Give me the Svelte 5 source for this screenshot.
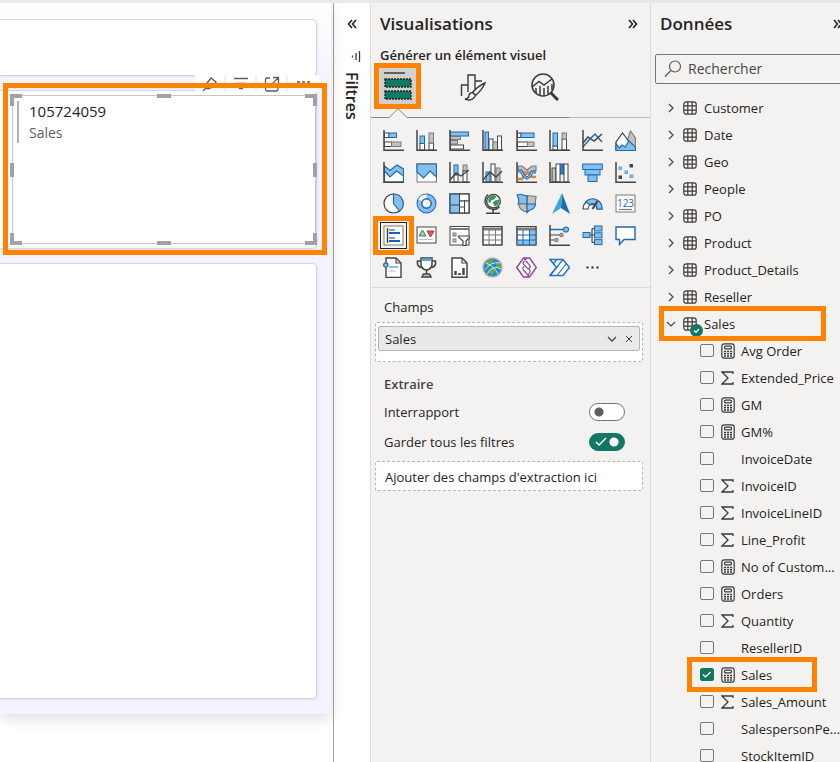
<script>
  const D = '#444444';
  const B = '#1f69ad';
  const LB = '#85bfee';
  const G = '#7d7b79';
  const LG = '#c4c2c0';
  const W = '#ffffff';

  const r = (x, y, w, h, fill, stroke) =>
    `<rect x="${x}" y="${y}" width="${w}" height="${h}" fill="${fill}" stroke="${stroke}"/>`;
  const p = (d, stroke = D, fill = 'none', width = 1.2) =>
    `<path d="${d}" stroke="${stroke}" fill="${fill}" stroke-width="${width}"/>`;
  const c = (x, y, radius, fill, stroke, width = 1.2) =>
    `<circle cx="${x}" cy="${y}" r="${radius}" fill="${fill}" stroke="${stroke}" stroke-width="${width}"/>`;
  const axis = p('M1 0V20.2H21', D, 'none', 1.5);

  const visuals = [
    ['Barres empilées', r(1.5, 3, 4.5, 4.5, W, D) + r(6, 3, 7.5, 4.5, LB, B) + r(1.5, 12, 7, 4.5, W, D) + r(8.5, 12, 9.5, 4.5, LG, G) + axis],
    ['Histogramme empilé', r(4, 13, 4.5, 7, W, D) + r(4, 6, 4.5, 7.5, LB, B) + r(13, 13, 4.5, 7, W, D) + r(13, 3, 4.5, 10, LG, G) + axis],
    ['Barres groupées', r(1.5, 2, 18, 4, LB, B) + r(1.5, 6.5, 10, 3, LG, G) + r(1.5, 10.5, 7, 3.5, LG, G) + r(1.5, 15, 13, 4, W, D) + axis],
    ['Histogramme groupé', r(3, 2, 3.5, 18, LB, B) + r(7, 9, 4, 11, W, D) + r(11, 12, 4.5, 8, LG, G) + r(15.5, 6, 4, 14, W, D) + axis],
    ['Barres 100 %', r(1.5, 3, 3.5, 4.5, W, D) + r(5, 3, 13, 4.5, LB, B) + r(1.5, 12, 10, 4.5, W, D) + r(11.5, 12, 6.5, 4.5, LG, G) + axis],
    ['Histogramme 100 %', r(4, 16, 4.5, 4, W, D) + r(4, 3, 4.5, 13, LB, B) + r(13, 9, 4.5, 11, W, D) + r(13, 3, 4.5, 6, LG, G) + axis],
    ['Courbes', p('M1 17L7 10L13 4L20 12', B, 'none', 1.5) + p('M1 13L6 7L12 11L20 4', D, 'none', 1.5) + axis],
    ['Aires', p('M9 20L15.5 1L20.5 8V20Z', G, LG) + p('M1 20V12L7.5 3L15 13L12 20Z', D, W) + p('M1 14L4.5 18L7 15L10 17L14 11L20.5 17V20.5H1Z', B, LB)],

    ['Aires empilées', p('M1.5 9L7 13L13.5 7L20.5 12V20H1.5Z', B, W) + p('M1.5 4L7 8.5L14 3L20.5 7V14L13.5 9L7 15L1.5 9Z', B, LB) + axis],
    ['Aires 100 %', r(1, 2, 19.5, 18, W, G) + p('M1 2H20.5V15L14 9L7.5 16L1 10Z', B, LB) + p('M1 1.7H20.5', G)],
    ['Courbes et histogramme empilé', r(5, 3, 4, 10, LB, B) + r(5, 13, 4, 7, W, D) + r(14, 3, 4, 6, LG, G) + r(14, 9, 4, 11, W, D) + p('M1 18L7 11L12 14L20 8', D, 'none', 1.4) + axis],
    ['Courbes et histogramme groupé', r(4, 10, 4, 10, LB, B) + r(9, 2, 4, 18, W, D) + r(14, 6, 4, 14, LG, G) + p('M1 18L8 10L14 15L20 9', D, 'none', 1.4) + axis],
    ['Ruban', p('M2 4L6 4L11 8L16 4H20V9H16L11 12L6 9H2Z', G, LG) + p('M2 17H6L11 10L16 15H20', '#e0842e', 'none', 2.6) + p('M2 9H5Q8 15 11 16Q14 15 16 10H20', B, 'none', 3) + p('M2 9H5Q8 15 11 16Q14 15 16 10H20', LB, 'none', 1.2) + axis],
    ['Cascade', r(3, 6, 4, 14, LG, D) + r(7, 2, 4, 18, W, D) + r(11.5, 2, 3, 10, '#2f7fc4', B) + r(15, 2, 4, 18, W, D) + axis],
    ['Entonnoir', r(0.7, 2, 19.6, 5.5, LB, B) + r(3, 7.5, 15, 5.5, LB, B) + r(6, 13, 9, 6.5, LB, B)],
    ['Nuage de points', r(4, 5, 2.5, 2.5, LB, '#6ca5d2') + r(10, 9, 2.5, 2.5, LB, '#6ca5d2') + r(15, 13, 3, 2.5, LB, '#6ca5d2') + r(15, 2.5, 2.5, 2.5, D, D) + r(4, 14, 2.5, 2.5, D, D) + axis],

    ['Secteurs', c(10.5, 10.5, 9.5, W, D) + p('M10.5 1A9.5 9.5 0 0 1 16.5 18L10.5 10.5Z', B, LB)],
    ['Anneau', c(10.5, 10.5, 7.2, 'none', B, 5.6) + c(10.5, 10.5, 7.2, 'none', LB, 3.6) + p('M4 7.3A7.2 7.2 0 0 1 10.5 3.3', W, 'none', 3.6) + c(10.5, 10.5, 4.4, '#f3f2f1', B, 1)],
    ['Treemap', r(1, 1, 9.5, 19, LB, B) + r(10.5, 1, 9.5, 7, W, D) + r(10.5, 8, 5, 12, W, D) + r(15.5, 8, 4.5, 12, W, D) + p('M1 12H10.5M10.5 14H15.5', D) + r(0.8, 0.8, 19.4, 19.4, 'none', D)],
    ['Carte', p('M6 1.5A8.500 8.500 0 1 0 17.5 14', D, 'none', 1.5) + c(11.5, 8.2, 6.8, W, D, 1.4) + p('M8 4Q11 1.500 14 3.500L12 6L9 7L7.500 10Q5.500 7 8 4ZM13 8L17 7Q17 12 13 13L11 10Z', '#2f8c55', '#3b9b62', 0.8) + p('M11 17V20M4 20.2H18', D, 'none', 1.6)],
    ['Carte choroplèthe', p('M11 2.500L20 3.500L19 12L11 11Z', G, LG) + p('M1 2Q5 0.500 7 2L11 3V11H2Q4 7 1 2Z', B, LB) + p('M2.500 11H11V19Q4 18 2.500 11Z', G, LG) + p('M11 11H19.500Q19 16 14 17L11 19.500Z', B, LB)],
    ['Azure Maps', '<path d="M13 0L21 21L12 15Z" fill="#1b6fa8"/><path d="M13 0L3 21L12 15Z" fill="#39a9dc"/>'],
    ['Jauge', p('M1 16A9.5 9.5 0 0 1 20 16H15A4.5 4.5 0 0 0 6 16Z', D, W) + p('M4 8.5A9.5 9.5 0 0 1 20 16H15A4.5 4.5 0 0 0 7.5 12Z', B, LB) + p('M10.5 16L15.5 8', D, 'none', 2)],
    ['Carte numérique', r(1, 2, 19, 17, W, G) + `<text x="10.5" y="14" text-anchor="middle" font-size="10" fill="${B}">123</text>` + p('M4 16.5H17', G)],

    ['Carte à plusieurs lignes', r(1, 1, 19, 19, W, G) + p('M4.5 3V18', D, 'none', 1.5) + p('M6 5H12M6 13H12', G, 'none', 1.5) + p('M6 8H17M6 16H17', '#1464b4', 'none', 2)],
    ['Indicateur de performance clé', r(1, 2, 19, 16, W, D) + '<path d="M3 11L6.5 5L10 11Z" fill="#9bd3ad" stroke="#278a50"/><path d="M11 6H18L14.5 12Z" fill="#e45858" stroke="#c22f36"/>' + p('M3 14.5H17', LG)],
    ['Segment', r(1, 1.5, 19, 18.5, W, D) + p('M1 4H20', G, 'none', 2) + r(4, 8, 3, 3, LG, G) + r(4, 14, 3, 3, LG, G) + p('M9.5 11H21V12L17 16V20.5H14V16L9.5 12Z', D, W)],
    ['Table', r(1, 1.5, 19, 18.5, W, D) + p('M1 4H20', G, 'none', 3) + p('M7 5V20M13.5 5V20M1 10H20M1 15H20', G, 'none', 1) + r(1, 1.5, 19, 18.5, 'none', D)],
    ['Matrice', r(1, 1.5, 19, 18.5, W, D) + '<path d="M13 5H20V20H13ZM1 15H20V20H1Z" fill="#85bfee"/>' + p('M1 4H20', G, 'none', 3) + p('M7 5V20M13.5 5V20M1 10H20M1 15H20', B, 'none', 1) + r(1, 1.5, 19, 18.5, 'none', D)],
    ['Influenceurs clés', p('M1 4.5H15', B, 'none', 1.5) + c(17, 4.5, 2.5, LB, B) + p('M1 10H11M1 15H6', G, 'none', 1.4) + c(12.5, 10, 1.6, LG, G) + c(7.5, 15, 1.6, LG, G) + axis],
    ['Arborescence hiérarchique', p('M8 10H12M10 3.5V17.5M10 3.5H12M10 17.5H12', D) + r(1, 7.5, 7, 5, LB, B) + r(12.5, 1, 7.5, 5, LB, B) + r(12.5, 7.8, 7.5, 5, LB, B) + r(12.5, 14.6, 7.5, 5, LB, B)],
    ['Questions et réponses', p('M1 2H20V14.5H9L4.5 19.5V14.5H1Z', B, W, 1.4)],

    ['Récit', p('M3 1H13L18 6V20.5H3Z', D, W, 1.4) + p('M13 1V6H18', D) + c(2.8, 8, 2.2, LB, B) + p('M6 10H15', '#3f8fd0', 'none', 1.2) + p('M6 14H12', '#9cc9ea')],
    ['Objectifs', p('M5 4H1.5V7Q2 10 6 10.5M16 4H19.5V7Q19 10 15 10.5', D, 'none', 1.6) + p('M5 1H16V8Q15 12.5 10.5 13Q6 12.5 5 8Z', D, W, 1.5) + '<path d="M5.5 1.5H15.5V4H5.5Z" fill="#59a6df"/>' + p('M10.5 13V17M7.5 17H13.5L15 20H6Z', D, LG, 1.5)],
    ['Rapport paginé', p('M3 1H13L18 6V20.3H3Z', D, W, 1.5) + p('M13 1V6H18', D) + p('M6.5 14V18M10.5 16V18M14.5 11V18', D, 'none', 2.4)],
    ['ArcGIS', c(10.5, 10.5, 9.6, '#2b87c8', '#b9b8b7', 1.4) + '<path d="M3 6Q7 1 12 3L10 7L5 9ZM6 12L11 10L14 13L10 19Q5 16 6 12ZM14 5L18 7Q20 10 18 13L14 9Z" fill="#59aa58"/>' + p('M3 13Q9 4 18 6M5 17Q12 7 19 12M4 6Q12 9 16 17', '#d8eee9', 'none', 0.9)],
    ['Power Apps', p('M7.500 1H13.500L20.300 10.5L13.500 20H7.500L0.700 10.5Z', '#90469b', W, 1.4) + p('M7.500 1L14 8.500Q15 10.500 13 12L10.500 10.500L7.500 7.500Q6.500 5.500 8 4.500L11 1M13.500 20L7.500 13Q6 11 8 9.500M13 12Q15 14 13.500 16L10.500 20', '#90469b')],
    ['Power Automate', p('M1 2.5H14L20.5 10.5L14 18.5H1L7.5 10.5Z', '#2375c7', W, 1.5) + p('M4.500 6.500L8 2.500M7.500 10.500L14 2.500M1 18.500L14 2.500M8 18.500L17.500 6.500', '#2375c7')],
    ['Plus de visuels', '<path d="M4.5 9.5h2v2h-2zM9.5 9.5h2v2h-2zM14.5 9.5h2v2h-2z" fill="#252423"/>']
  ];

  const tables = ['Customer', 'Date', 'Geo', 'People', 'PO', 'Product', 'Product_Details', 'Reseller'];

  const fields = $state([
    { name: 'Avg Order', kind: 'measure', on: false },
    { name: 'Extended_Price', kind: 'sum', on: false },
    { name: 'GM', kind: 'measure', on: false },
    { name: 'GM%', kind: 'measure', on: false },
    { name: 'InvoiceDate', kind: '', on: false },
    { name: 'InvoiceID', kind: 'sum', on: false },
    { name: 'InvoiceLineID', kind: 'sum', on: false },
    { name: 'Line_Profit', kind: 'sum', on: false },
    { name: 'No of Custom...', kind: 'measure', on: false },
    { name: 'Orders', kind: 'measure', on: false },
    { name: 'Quantity', kind: 'sum', on: false },
    { name: 'ResellerID', kind: '', on: false },
    { name: 'Sales', kind: 'measure', on: true, marked: true },
    { name: 'Sales_Amount', kind: 'sum', on: false },
    { name: 'SalespersonPe...', kind: '', on: false },
    { name: 'StockItemID', kind: '', on: false }
  ]);

  const handles = ['tl', 'tc', 'tr', 'ml', 'mr', 'bl', 'bc', 'br'];
  let crossReport = $state(false);
  let keepFilters = $state(true);
</script>

{#snippet tableIcon()}
  <svg width="14" height="14" viewBox="0 0 14 14" fill="none" stroke="#3b3a39" stroke-width="1.2">
    <rect x="0.8" y="0.8" width="12.4" height="12.4" rx="2.5" />
    <path d="M4.8 1V13M9.2 1V13M1 4.8H13M1 9.2H13" />
  </svg>
{/snippet}

{#snippet chevrons(left)}
  <svg width="10" height="10" viewBox="0 0 10 10" fill="none" stroke="#252423" stroke-width="1.6">
    {#if left}
      <path d="M5 1L1.5 5L5 9M9 1L5.5 5L9 9" />
    {:else}
      <path d="M1 1L4.5 5L1 9M5 1L8.5 5L5 9" />
    {/if}
  </svg>
{/snippet}

<div class="app">
  <main class="report">
    <div class="canvas">
      <section class="card first"></section>
      <section class="card selected">
        <div class="tools">
          <button aria-label="Épingler"><svg width="16" height="16" viewBox="0 0 16 16"><path d="M1 15L4 12M2 11L9 2L14 6L11 11L6 13Z" /></svg></button>
          <button aria-label="Filtres"><svg width="16" height="16" viewBox="0 0 16 16"><path d="M1 2.500H15M3 7.500H13M6 12.500H10" /></svg></button>
          <button aria-label="Mode Focus"><svg width="16" height="16" viewBox="0 0 16 16"><path d="M6 2H3Q1.500 2 1.500 4V13Q1.500 15 3 15H12Q14 15 14 13V9M9 1.500H14.500V7M14 2L8 8" /></svg></button>
          <button aria-label="Plus d'options"><svg width="16" height="16" viewBox="0 0 16 16"><path d="M2 6h3M7 6h3M12 6h3" stroke-width="2" /></svg></button>
        </div>
        <div class="frame">
          {#each handles as h}<i class="handle {h}"></i>{/each}
          <div class="value"><strong>105724059</strong><span>Sales</span></div>
        </div>
        <div class="mark visual-mark"></div>
      </section>
      <section class="card last"></section>
    </div>
  </main>

  <aside class="filters">
    <button class="plain" aria-label="Développer les filtres">{@render chevrons(true)}</button>
    <svg class="filter-icon" width="10" height="11" viewBox="0 0 10 11" fill="none" stroke="#3b3a39" stroke-width="1.300"><path d="M8.500 0V11M5 2V9M1.500 4.500V6.500" /></svg>
    <h2>Filtres</h2>
  </aside>

  <section class="visualisations">
    <header><h2>Visualisations</h2><button class="plain" aria-label="Réduire Visualisations">{@render chevrons(false)}</button></header>
    <h3>Générer un élément visuel</h3>
    <div class="tabs">
      <button class="tab active" aria-label="Générer un élément visuel">
        <svg width="30" height="30" viewBox="0 0 30 30" fill="none">
          <path d="M1 2H22" stroke="#252423" stroke-width="1.300" />
          <path d="M2 8H28V16H2ZM2 20H28V28H2Z" fill="#117865" stroke="#252423" stroke-width="1.400" stroke-dasharray="2 1" />
        </svg>
      </button>
      <button class="tab" aria-label="Mettre en forme">
        <svg width="26" height="28" viewBox="0 0 26 28" fill="none" stroke="#3b3a39" stroke-width="1.400">
          <path d="M1.500 23V12H8M8 19V2H15V16M15 8H22" />
          <path d="M25 10Q18 13 12.500 19.500L15.500 22.500Q22 17 25 10Z" fill="#f3f2f1" />
          <path d="M12.500 19.500Q9 20 9 23Q8 26 5 26Q12 29 15.500 22.500Z" fill="#f3f2f1" />
        </svg>
      </button>
      <button class="tab" aria-label="Analyse">
        <svg width="28" height="28" viewBox="0 0 28 28" fill="none" stroke="#3b3a39" stroke-width="1.500">
          <circle cx="12" cy="12" r="11" />
          <path d="M1 14L8 8.500L13 12L21 6" />
          <path d="M5 15V20M9 13V22M13 15V22.500M17 13V21M21 11V17" />
          <path d="M19.500 19.500L27 27" stroke-width="3" />
        </svg>
      </button>
    </div>
    <div class="rule">
      <svg width="36" height="10" viewBox="0 0 36 10" fill="#f3f2f1" stroke="#8a8886"><path d="M0 9.500H18L27 0.700L36 9.500" /></svg>
      <i></i><i class="pale"></i>
    </div>
    <div class="gallery">
      {#each visuals as [name, art], i}
        <button aria-label={name} class:chosen={i === 24}>
          <svg width="21" height="21" viewBox="0 0 21 21">{@html art}</svg>
          {#if i === 24}<span class="mark icon-mark"></span>{/if}
        </button>
      {/each}
    </div>
    <div class="wells">
      <h4 class="regular">Champs</h4>
      <div class="well filled">
        <div class="chip">
          <span>Sales</span>
          <button aria-label="Options du champ"><svg width="10" height="6" viewBox="0 0 10 6"><path d="M1 1L5 5L9 1" /></svg></button>
          <button aria-label="Supprimer le champ"><svg width="8" height="8" viewBox="0 0 8 8"><path class="thin" d="M1 1L7 7M7 1L1 7" /></svg></button>
        </div>
      </div>
      <h4>Extraire</h4>
      <label class="switch-row">Interrapport
        <span class="switch"><input type="checkbox" role="switch" bind:checked={crossReport} /></span>
      </label>
      <label class="switch-row">Garder tous les filtres
        <span class="switch"><input type="checkbox" role="switch" bind:checked={keepFilters} />
          {#if keepFilters}<svg width="12" height="10" viewBox="0 0 12 10" fill="none" stroke="#fff" stroke-width="1.500"><path d="M1 5L4 8L11 1" /></svg>{/if}
        </span>
      </label>
      <div class="well">Ajouter des champs d'extraction ici</div>
    </div>
  </section>

  <section class="data">
    <header><h2>Données</h2><button class="plain" aria-label="Réduire Données">{@render chevrons(false)}</button></header>
    <label class="search">
      <svg width="18" height="18" viewBox="0 0 18 18" fill="none" stroke="#605e5c" stroke-width="1.200"><circle cx="11" cy="6.500" r="5.500" /><path d="M7 10.500L1 16.500" /></svg>
      <input type="search" placeholder="Rechercher" aria-label="Rechercher" />
    </label>
    <ul class="tree">
      {#each tables as name}
        <li class="table-row">
          <button><svg class="caret" width="10" height="10" viewBox="0 0 10 10"><path d="M3 1L7 5L3 9" /></svg>{@render tableIcon()}<span>{name}</span></button>
        </li>
      {/each}
      <li class="table-row">
        <button>
          <svg class="caret" width="10" height="10" viewBox="0 0 10 10"><path d="M1 3L5 7L9 3" /></svg>
          <span class="badged">{@render tableIcon()}
            <svg class="badge" width="13" height="13" viewBox="0 0 13 13"><circle cx="6.500" cy="6.500" r="6.500" fill="#117865" /><path d="M4 6.500L6 8.300L9 5" fill="none" stroke="#fff" stroke-width="1.300" /></svg>
          </span><span>Sales</span>
        </button>
        <div class="mark table-mark"></div>
      </li>
      {#each fields as field}
        <li class="field-row">
          <label>
            <span class="tick"><input type="checkbox" bind:checked={field.on} />
              {#if field.on}<svg width="13" height="13" viewBox="0 0 13 13" fill="none" stroke="#fff" stroke-width="1.200"><path d="M3 6.500L5.500 9L10.500 4" /></svg>{/if}
            </span>
            <span class="kind">
              {#if field.kind === 'measure'}
                <svg width="14" height="16" viewBox="0 0 14 16" fill="none" stroke="#3b3a39" stroke-width="1.200"><rect x="0.800" y="0.800" width="12.400" height="14.400" rx="2.500" /><rect x="3.500" y="3.200" width="7" height="2.600" rx="1" /><path d="M3 8.500h2M6 8.500h2M9 8.500h2M3 10.800h2M6 10.800h2M9 10.800h2M3 13h2M6 13h2M9 13h2" stroke-width="1.400" /></svg>
              {:else if field.kind === 'sum'}
                <svg width="13" height="14" viewBox="0 0 13 14" fill="none" stroke="#3b3a39" stroke-width="1.300"><path d="M12 3V1H1L7 7L1 13H12V11" /></svg>
              {/if}
            </span>
            <span>{field.name}</span>
          </label>
          {#if field.marked}<div class="mark field-mark"></div>{/if}
        </li>
      {/each}
    </ul>
  </section>
</div>

<style>
  :global(body) { background: #fff; }
  * { box-sizing: border-box; }
  .app {
    display: flex;
    height: 100vh;
    overflow: hidden;
    border-top: 3px solid #e9e9e9;
    color: #252423;
    font: 13px/20px "Open Sans", "Noto Sans", sans-serif;
  }
  h2, h3, h4, ul { margin: 0; padding: 0; }
  h2 { font-size: 17px; line-height: 24px; font-weight: 600; }
  h3 { font-size: 13px; line-height: 20px; font-weight: 600; }
  h4 { font-size: 13px; line-height: 20px; font-weight: 600; color: #484644; }
  h4.regular { font-weight: 400; color: #252423; }
  button { display: flex; align-items: center; padding: 0; border: 0; background: none; color: inherit; font: inherit; }
  svg { display: block; flex: none; }
  .mark { position: absolute; border: 5px solid #ff8200; pointer-events: none; z-index: 3; }

  .report { flex: 1; min-width: 0; border-right: 1px solid #a3a2a1; }
  .canvas {
    display: flex;
    flex-direction: column;
    gap: 14px;
    margin-right: 2px;
    padding: 16px 14px 15px 0;
    background: linear-gradient(#fff, #f3f2fe 90px);
    box-shadow: 0 4px 14px #00000024;
  }
  .card { background: #fff; border: 1px solid #d5d4df; border-left: 0; border-radius: 0 5px 5px 0; box-shadow: 1px 1px 2px #c9c8e060; }
  .first { height: 57px; }
  .last { height: 436px; }
  .selected { position: relative; height: 159px; padding: 4px 0 5px 12px; }
  .visual-mark { inset: -8px -11px -7px 3px; }
  .tools { position: absolute; right: -3px; top: -16px; display: flex; }
  .tools button { width: 31px; height: 17px; justify-content: center; background: #fff; border-right: 2px solid #f1f0fa; }
  .tools button:last-child { border-color: #fff; }
  .tools path { fill: none; stroke: #605e5c; stroke-width: 1.3; }
  .frame { position: relative; height: 149px; border: 1px solid #c8c6c8; padding: 5px 4px; }
  .value { display: flex; flex-direction: column; border-left: 2px solid #b3b0ad; padding-left: 10px; }
  .value strong { font-size: 15px; line-height: 21px; font-weight: 400; }
  .value span { font-size: 14px; line-height: 21px; color: #605e5c; }
  .handle { position: absolute; border: 0 solid #a2a2a2; width: 12px; height: 12px; }
  .tl { left: -3px; top: -2px; border-width: 4px 0 0 4px; }
  .tr { right: -2px; top: -2px; border-width: 4px 4px 0 0; }
  .bl { left: -3px; bottom: -2px; border-width: 0 0 4px 4px; }
  .br { right: -2px; bottom: -2px; border-width: 0 4px 4px 0; }
  .tc, .bc { left: calc(50% - 7px); width: 14px; height: 4px; background: #a2a2a2; }
  .tc { top: -2px; }
  .bc { bottom: -2px; }
  .ml, .mr { top: calc(50% - 7px); width: 4px; height: 14px; background: #a2a2a2; }
  .ml { left: -3px; }
  .mr { right: -2px; }

  .filters { flex: none; width: 36px; display: flex; flex-direction: column; align-items: center; padding-top: 16px; }
  .filter-icon { margin: 22px 0 10px 8px; }
  .filters h2 { writing-mode: vertical-rl; font-size: 16px; }

  .visualisations { flex: none; width: 280px; background: #f3f2f1; border-left: 1px solid #dddbda; }
  header { display: flex; align-items: center; justify-content: space-between; height: 42px; padding: 0 12px 0 9px; }
  h3 { padding: 0 9px; }
  .tabs { display: flex; gap: 32px; height: 43px; padding-left: 3px; }
  .tab { width: 40px; height: 43px; justify-content: center; }
  .tab.active { width: 47px; height: 46px; margin-top: -2px; background: #d2d0ce; border: 5px solid #ff8200; }
  .rule { display: flex; align-items: flex-end; height: 10px; margin-bottom: 7px; }
  .rule i { flex: 2; height: 1px; background: #8a8886; }
  .rule .pale { flex: 1; background: #bab8b7; }
  .gallery { display: grid; grid-template-columns: repeat(8, 1fr); grid-template-rows: repeat(5, 1fr); height: 163px; padding: 0 8px 4px 6px; border-bottom: 1px solid #dddbda; font-size: 10px; }
  .gallery button { position: relative; justify-content: center; }
  .chosen svg { outline: 1px solid #252423; outline-offset: 2px; }
  .icon-mark { inset: -4px; }

  .wells { padding: 9px 7px 0 4px; }
  .wells h4 { padding-left: 9px; }
  .well { border: 1px dashed #b8b6b4; background: #fff; padding: 5px 9px 3px; border-radius: 2px; margin-top: 4px; }
  .well.filled { margin: 5px 0 12px; padding: 3px 2px 10px; }
  .chip { display: flex; align-items: center; height: 25px; padding: 0 6px; gap: 8px; background: #eae9e8; border: 1px solid #b8b6b4; border-radius: 2px; }
  .chip span { flex: 1; }
  .chip path { fill: none; stroke: #484644; stroke-width: 1.3; }
  .chip .thin { stroke-width: 1; }
  .switch-row { display: flex; align-items: center; justify-content: space-between; height: 30px; padding: 0 18px 0 9px; }
  h4 + .switch-row { margin-top: 3px; }
  .switch { position: relative; display: flex; }
  .switch input { appearance: none; width: 36px; height: 18px; margin: 0; border: 1px solid #797775; border-radius: 9px; background: radial-gradient(circle at 9px 8px, #605e5c 4px, #fff 5px); }
  .switch input:checked { border-color: #117865; background: radial-gradient(circle at 24px 8px, #fff 4px, #117865 5px); }
  .switch svg { position: absolute; left: 6px; top: 4px; }

  .data { flex: none; width: 190px; overflow: hidden; background: #f3f2f1; border-left: 1px solid #dddbda; }
  .data header { padding-right: 0; margin-right: -3px; }
  .search { display: flex; align-items: center; gap: 6px; width: 210px; height: 30px; margin: 9px 0 10px 4px; padding-left: 8px; border: 1px solid #797775; border-radius: 2px; }
  .search input { flex: 1; min-width: 0; border: 0; outline: 0; padding: 0; background: none; color: #484644; font: 14px/20px "Open Sans", "Noto Sans", sans-serif; }
  .search input::placeholder { color: #484644; opacity: 1; }
  .tree { list-style: none; }
  .tree li { position: relative; height: 27px; white-space: nowrap; }
  .table-row button { gap: 7px; height: 27px; padding-left: 15px; }
  .caret { fill: none; stroke: #484644; stroke-width: 1.2; }
  .badged { position: relative; }
  .badge { position: absolute; left: 7px; top: 7px; }
  .field-row label { display: flex; align-items: center; height: 27px; padding-left: 49px; }
  .tick { flex: none; position: relative; display: flex; }
  .tick input { appearance: none; width: 14px; height: 13px; margin: 0; border: 1px solid #797775; border-radius: 2px; }
  .tick input:checked { background: #117865; border-color: #117865; }
  .tick svg { position: absolute; left: 0; top: 0; }
  .kind { flex: none; width: 27px; display: flex; justify-content: center; }
  .table-mark { inset: -4px 14px -4px 8px; }
  .field-mark { inset: -4px 23px -4px 36px; }
</style>
